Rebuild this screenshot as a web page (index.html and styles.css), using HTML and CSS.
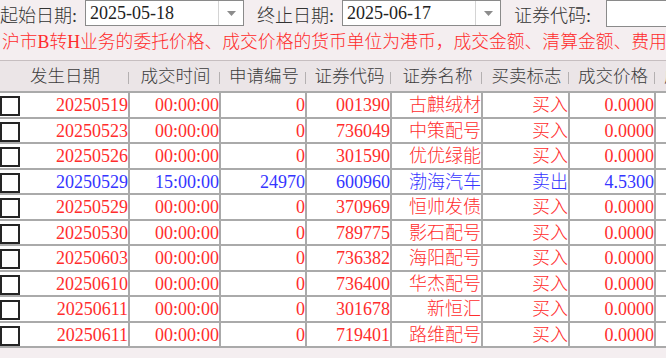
FILE: index.html
```html
<!DOCTYPE html>
<html lang="zh-CN">
<head>
    <meta charset="UTF-8">
    <title>历史成交查询</title>
    <link rel="stylesheet" href="styles.css">
</head>
<body>

    <!-- 查询条件 -->
    <div class="toolbar">
        <label class="field-label">起始日期:</label>
        <div class="combo">
            <span class="combo-text">2025-05-18</span>
            <span class="combo-btn"><svg width="9" height="5" viewBox="0 0 9 5"><polygon points="0,0 9,0 4.5,5" fill="#8c8c8c"/></svg></span>
        </div>
        <label class="field-label">终止日期:</label>
        <div class="combo">
            <span class="combo-text">2025-06-17</span>
            <span class="combo-btn"><svg width="9" height="5" viewBox="0 0 9 5"><polygon points="0,0 9,0 4.5,5" fill="#8c8c8c"/></svg></span>
        </div>
        <label class="field-label">证券代码:</label>
        <div class="text-box"></div>
    </div>

    <div class="notice">沪市B转H业务的委托价格、成交价格的货币单位为港币，成交金额、清算金额、费用的币种为人民币。</div>

    <!-- 成交列表 -->
    <div class="grid">
        <div class="grid-head">
            <div class="th">发生日期</div>
            <div class="th">成交时间</div>
            <div class="th">申请编号</div>
            <div class="th">证券代码</div>
            <div class="th">证券名称</div>
            <div class="th">买卖标志</div>
            <div class="th">成交价格</div>
            <div class="th">成交数量</div>
        </div>

        <div class="grid-row buy">
            <div class="td first"><span class="check"></span>20250519</div>
            <div class="td">00:00:00</div><div class="td">0</div><div class="td">001390</div>
            <div class="td">古麒绒材</div><div class="td">买入</div><div class="td">0.0000</div><div class="td"></div>
        </div>
        <div class="grid-row buy">
            <div class="td first"><span class="check"></span>20250523</div>
            <div class="td">00:00:00</div><div class="td">0</div><div class="td">736049</div>
            <div class="td">中策配号</div><div class="td">买入</div><div class="td">0.0000</div><div class="td"></div>
        </div>
        <div class="grid-row buy">
            <div class="td first"><span class="check"></span>20250526</div>
            <div class="td">00:00:00</div><div class="td">0</div><div class="td">301590</div>
            <div class="td">优优绿能</div><div class="td">买入</div><div class="td">0.0000</div><div class="td"></div>
        </div>
        <div class="grid-row sell">
            <div class="td first"><span class="check"></span>20250529</div>
            <div class="td">15:00:00</div><div class="td">24970</div><div class="td">600960</div>
            <div class="td">渤海汽车</div><div class="td">卖出</div><div class="td">4.5300</div><div class="td"></div>
        </div>
        <div class="grid-row buy">
            <div class="td first"><span class="check"></span>20250529</div>
            <div class="td">00:00:00</div><div class="td">0</div><div class="td">370969</div>
            <div class="td">恒帅发债</div><div class="td">买入</div><div class="td">0.0000</div><div class="td"></div>
        </div>
        <div class="grid-row buy">
            <div class="td first"><span class="check"></span>20250530</div>
            <div class="td">00:00:00</div><div class="td">0</div><div class="td">789775</div>
            <div class="td">影石配号</div><div class="td">买入</div><div class="td">0.0000</div><div class="td"></div>
        </div>
        <div class="grid-row buy">
            <div class="td first"><span class="check"></span>20250603</div>
            <div class="td">00:00:00</div><div class="td">0</div><div class="td">736382</div>
            <div class="td">海阳配号</div><div class="td">买入</div><div class="td">0.0000</div><div class="td"></div>
        </div>
        <div class="grid-row buy">
            <div class="td first"><span class="check"></span>20250610</div>
            <div class="td">00:00:00</div><div class="td">0</div><div class="td">736400</div>
            <div class="td">华杰配号</div><div class="td">买入</div><div class="td">0.0000</div><div class="td"></div>
        </div>
        <div class="grid-row buy">
            <div class="td first"><span class="check"></span>20250611</div>
            <div class="td">00:00:00</div><div class="td">0</div><div class="td">301678</div>
            <div class="td">新恒汇</div><div class="td">买入</div><div class="td">0.0000</div><div class="td"></div>
        </div>
        <div class="grid-row buy">
            <div class="td first"><span class="check"></span>20250611</div>
            <div class="td">00:00:00</div><div class="td">0</div><div class="td">719401</div>
            <div class="td">路维配号</div><div class="td">买入</div><div class="td">0.0000</div><div class="td"></div>
        </div>
    </div>

</body>
</html>
```

FILE: styles.css
```css
body {
    margin: 0;
    width: 666px;
    height: 358px;
    overflow: hidden;
    background-color: #f4eef0;
    font-family: "Liberation Serif", "Noto Sans CJK SC", serif;
    font-weight: 300;
}
.toolbar {
    display: flex;
    align-items: center;
    height: 27px;
    white-space: nowrap;
}
.field-label {
    font-size: 18px;
    color: #333;
    margin-right: 8px;
}
.combo {
    display: flex;
    flex-shrink: 0;
    height: 26px;
    margin-right: 13px;
    margin-top: -1px;
    background: #fff;
    border: 1px solid #8a8a8a;
    box-sizing: border-box;
}
.combo-text {
    width: 128px;
    padding-left: 4px;
    font-size: 18px;
    line-height: 24px;
    color: #222;
}
.combo-btn {
    width: 24px;
    display: flex;
    align-items: center;
    justify-content: center;
    border-left: 1px solid #d4d4d4;
}
.text-box {
    flex-shrink: 0;
    width: 80px;
    height: 27px;
    margin-left: 7px;
    background: #fff;
    border: 1px solid #8a8a8a;
    box-sizing: border-box;
}
.notice {
    height: 33px;
    line-height: 31px;
    padding-left: 2px;
    font-size: 17.8px;
    color: #ff2b2b;
    white-space: nowrap;
    overflow: hidden;
}
.grid {
    width: 742px;
}
.grid-head, .grid-row {
    display: grid;
    grid-template-columns: 130px 91px 86px 85px 91px 87px 86px 86px;
}
.grid-head {
    height: 33px;
    box-sizing: border-box;
    background: #ebe5e7;
    border-top: 1px solid #c6bec0;
    border-bottom: 2px solid #aaa;
}
.th {
    position: relative;
    text-align: center;
    font-size: 17.5px;
    line-height: 31px;
    color: #3c3c3c;
}
.th::after {
    content: "";
    position: absolute;
    right: 1px;
    top: 11px;
    width: 1px;
    height: 12px;
    background: #b4b0b1;
}
.grid-row {
    height: 25.55px;
    box-sizing: border-box;
    background: #fff;
    border-bottom: 2px solid #aaa;
}
.td {
    text-align: right;
    font-size: 18px;
    line-height: 24px;
    white-space: nowrap;
    overflow: hidden;
    border-right: 2px solid #aaa;
}
.td.first {
    display: flex;
    justify-content: space-between;
}
.check {
    width: 20px;
    height: 20px;
    margin-top: 3px;
    box-sizing: border-box;
    background: #fff;
    border: 2px solid #252525;
}
.buy .td {
    color: #ff2d2d;
}
.sell .td {
    color: #3535ff;
}
```
